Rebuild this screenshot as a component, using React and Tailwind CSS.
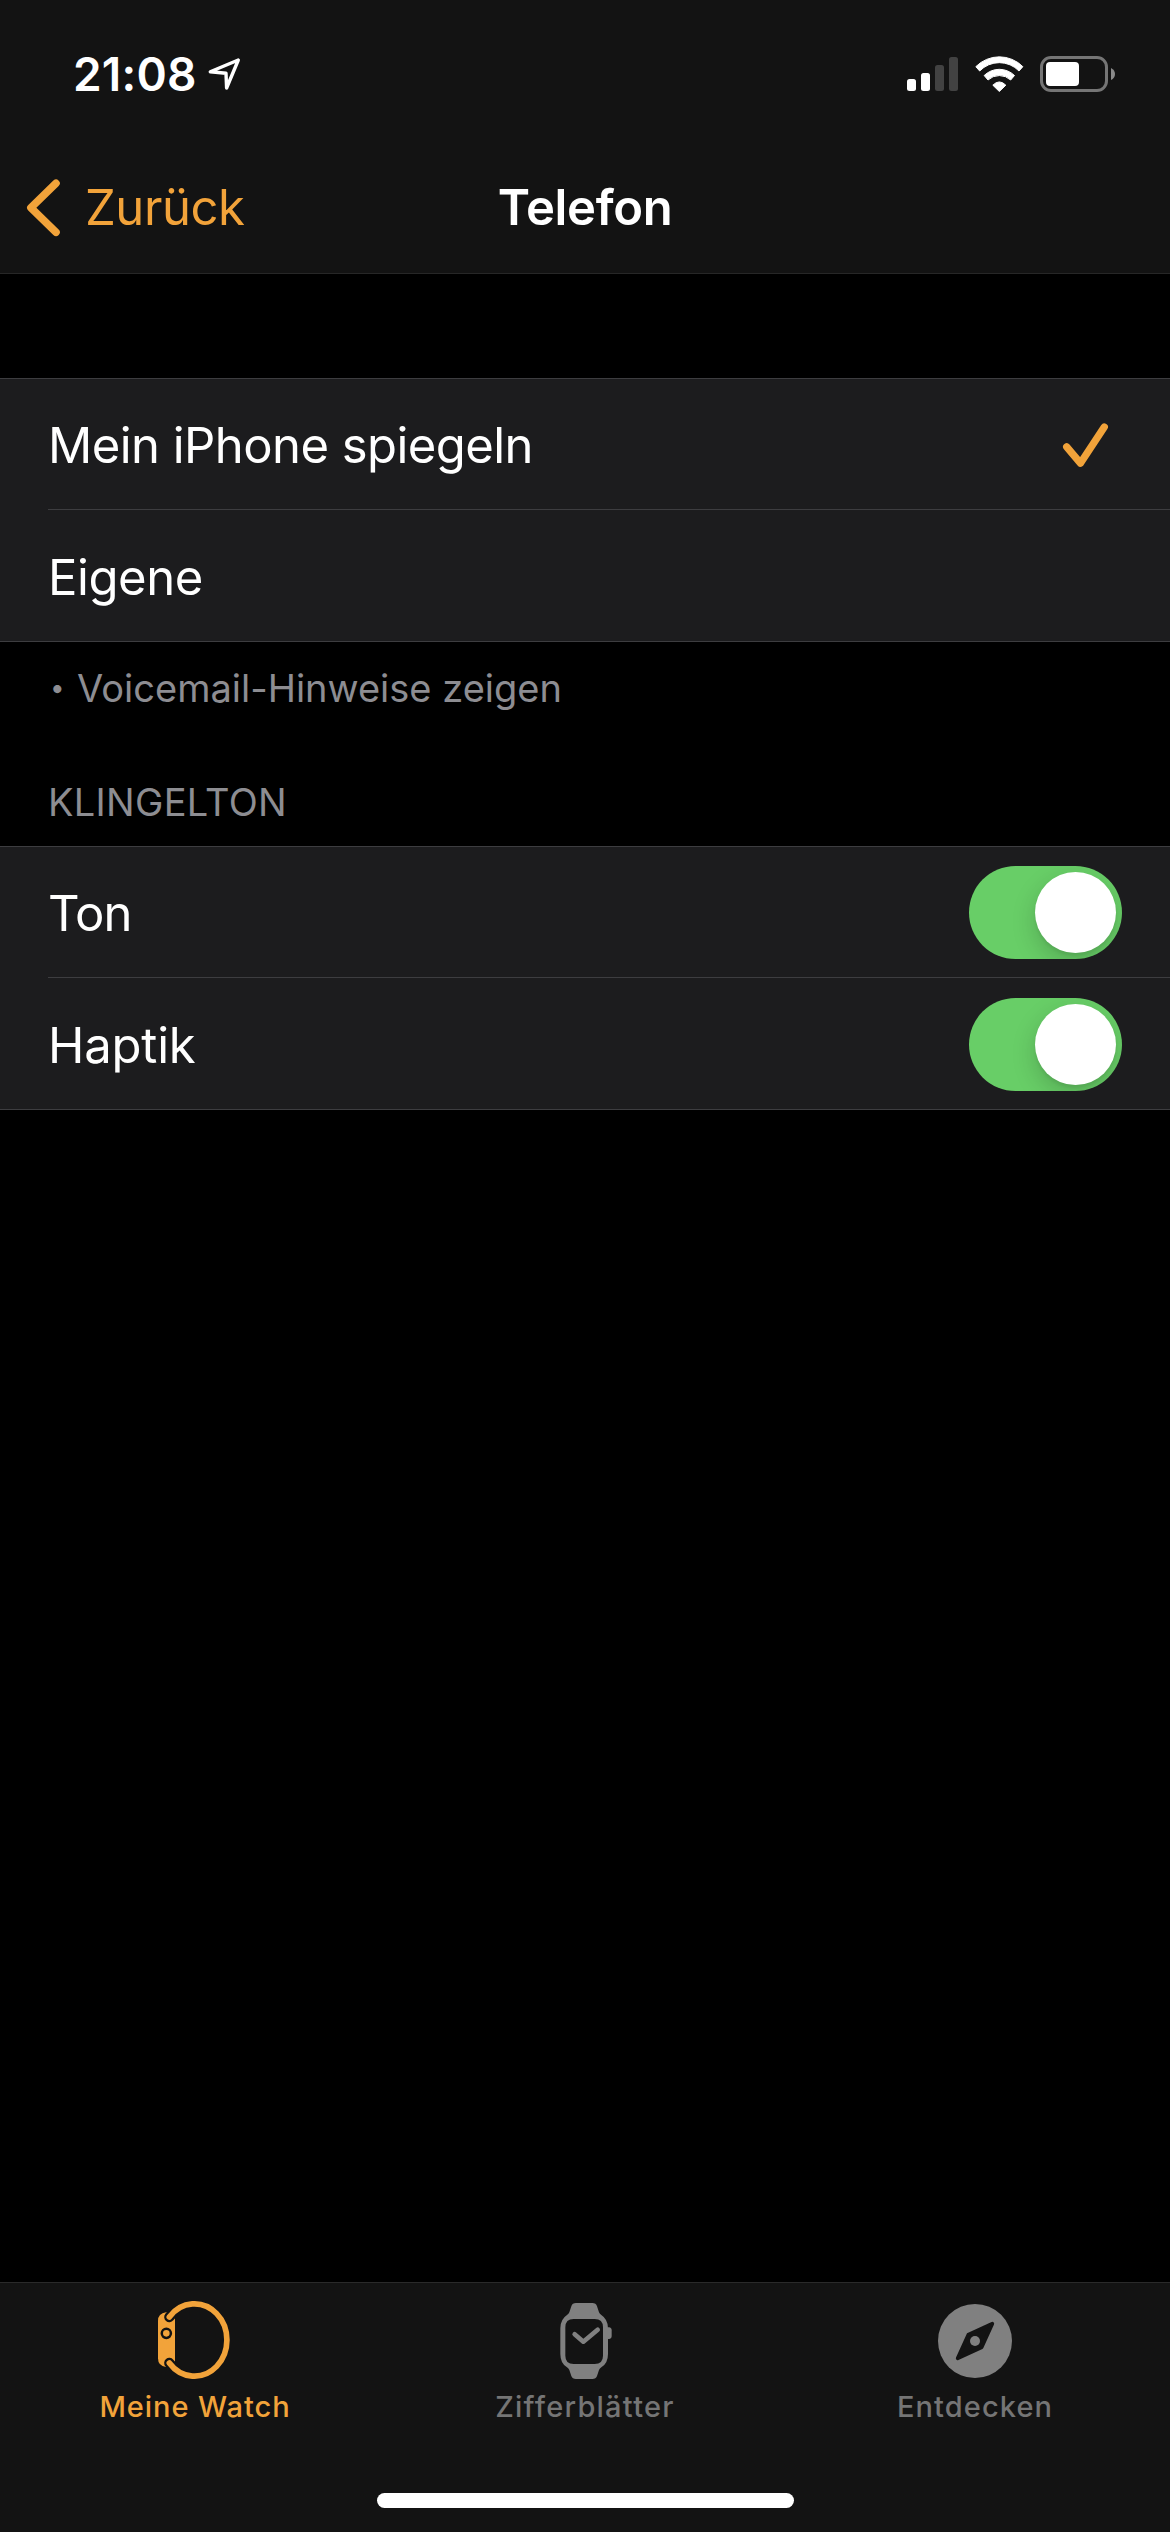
import React, { useState } from "react";

function LocationArrow() {
  return (
    <svg className="ml-[9px] h-9 w-9" viewBox="205 56 36 36" fill="none" stroke="#fff" strokeWidth="3.4" strokeLinejoin="round">
      <path d="M237.3 60 L209.3 71.8 L225 73.3 L225.6 88 Z" />
    </svg>
  );
}

function SignalBars() {
  return (
    <svg className="h-[34px] w-[51px]" viewBox="0 0 51 34">
      <rect x="0" y="22" width="9" height="12" rx="2.5" fill="#fff" />
      <rect x="14" y="16" width="9" height="18" rx="2.5" fill="#fff" />
      <rect x="28" y="8" width="9" height="26" rx="2.5" fill="#424242" />
      <rect x="42" y="0" width="9" height="34" rx="2.5" fill="#424242" />
    </svg>
  );
}

function Wifi() {
  return (
    <svg className="ml-[17px] h-9 w-[49px]" viewBox="344 75 147 108" fill="#fff" stroke="#fff" strokeWidth="3" strokeLinejoin="round">
      <path d="M346.5 107 A99 99 0 0 1 487.5 107 L476 120 A82 82 0 0 0 358 120 Z" />
      <path d="M371.5 133.5 A65 65 0 0 1 462.5 133.5 L451 147 A50 50 0 0 0 383 147 Z" />
      <path d="M397.5 162.5 Q417 143 436.5 162.5 L417 181.5 Z" />
    </svg>
  );
}

function Battery() {
  return (
    <svg className="ml-4 h-9 w-[76px]" viewBox="0 0 76 36">
      <rect x="1.5" y="1.5" width="65" height="33" rx="9.5" fill="none" stroke="#757575" strokeWidth="3" />
      <rect x="6" y="6" width="33" height="24" rx="4" fill="#fff" />
      <path d="M71 12 Q75 14 75 18 Q75 22 71 24 Z" fill="#8a8a8a" />
    </svg>
  );
}

function StatusBar() {
  return (
    <div className="flex h-[148px] items-center justify-between pr-[54px] pl-[73px]">
      <div className="flex items-center">
        <span className="text-[46px] leading-[56px] font-semibold tracking-[0.2px]">21:08</span>
        <LocationArrow />
      </div>
      <div className="flex items-center">
        <SignalBars />
        <Wifi />
        <Battery />
      </div>
    </div>
  );
}

function NavBar() {
  return (
    <div className="grid h-[125px] grid-cols-3 items-center pb-[6px]">
      <button className="flex items-center pl-[26px] text-[#f2a33a]">
        <svg className="h-[58px] w-9" viewBox="26 178 36 58" fill="none" stroke="currentColor" strokeWidth="7.6" strokeLinecap="round" strokeLinejoin="round">
          <path d="M56 182.3 L30.9 206.8 L56 231.3" />
        </svg>
        <span className="ml-[23px] text-[49px] leading-[60px] tracking-[-0.45px]">Zurück</span>
      </button>
      <h1 className="text-center text-[49px] leading-[60px] font-semibold tracking-[-0.35px]">Telefon</h1>
    </div>
  );
}

function Check() {
  return (
    <svg className="mr-[60px] h-[50px] w-12" viewBox="1062 420 48 50" fill="none" stroke="#f2a33a" strokeWidth="7.3" strokeLinecap="round" strokeLinejoin="round">
      <path d="M1066.7 446.8 L1080.4 463.2 L1104.3 427" />
    </svg>
  );
}

function Toggle({ on, onChange, label }) {
  return (
    <button
      role="switch"
      aria-checked={on}
      aria-label={label}
      onClick={onChange}
      className={`mr-12 flex h-[93px] w-[153px] items-center overflow-hidden rounded-full px-[6px] ${on ? "justify-end bg-[#68ce67]" : "justify-start bg-[#39393d]"}`}
    >
      <span className="size-[81px] rounded-full bg-white shadow-[0_9px_24px_rgba(0,0,0,0.18),0_3px_3px_rgba(0,0,0,0.06)]" />
    </button>
  );
}

function Group({ children }) {
  return <div className="border-y border-[#3d3d40] bg-[#1c1c1e]">{children}</div>;
}

function Row({ title, tracking = "tracking-[-0.45px]", last = false, children }) {
  return (
    <div className={`ml-12 flex h-[131px] items-center justify-between ${last ? "pt-[2px]" : "border-b border-[#3d3d40] pt-px"}`}>
      <span className={`pt-[2px] text-[49px] leading-[60px] ${tracking}`}>{title}</span>
      {children}
    </div>
  );
}

function BandIcon() {
  return (
    <svg className="h-20 w-[78px]" viewBox="228 90 234 240" fill="none" strokeLinecap="round">
      <path d="M285 127 H258 Q234 130 234 153 V265 Q234 288 258 291 H285 Z" fill="#f2a33a" />
      <path d="M268 141 Q278 129 292 117 M268 279 Q278 291 292 303" stroke="#131313" strokeWidth="31" />
      <path d="M268 141 A97.5 108.5 0 1 1 268 279" stroke="#f2a33a" strokeWidth="17" />
      <circle cx="259" cy="190" r="13.7" stroke="#131313" strokeWidth="7.5" />
    </svg>
  );
}

function FaceIcon() {
  return (
    <svg className="h-20 w-[78px]" viewBox="228 90 234 240" fill="#808080">
      <path
        fillRule="evenodd"
        d="M318 99 H367 Q378 99 381 109 L387 127 Q389 132 394 135 Q414 148 414 175 V252 Q414 280 394 292 Q389 295 387 300 L381 318 Q378 327 367 327 H318 Q307 327 304 318 L298 300 Q296 295 291 292 Q271 280 271 252 V175 Q271 148 291 135 Q296 132 298 127 L304 109 Q307 99 318 99 Z M311 147 Q286 147 286 172 V257 Q286 282 311 282 H374 Q399 282 399 257 V172 Q399 147 374 147 Z"
      />
      <path d="M412 172 H417 Q425 173 425 181 V198 Q425 206 417 207 H412 Z" />
      <path d="M314 193 L340 215 L383 179" fill="none" stroke="#808080" strokeWidth="14" strokeLinecap="round" strokeLinejoin="round" />
    </svg>
  );
}

function CompassIcon() {
  return (
    <svg className="h-20 w-[78px]" viewBox="198 90 234 240">
      <circle cx="315" cy="213" r="111" fill="#808080" />
      <path d="M367 161 L295 194 L263 265 L335 232 Z" fill="#131313" stroke="#131313" strokeWidth="11" strokeLinejoin="round" />
      <circle cx="315" cy="213" r="15" fill="#808080" />
    </svg>
  );
}

function Tab({ label, className, children }) {
  return (
    <button className="flex flex-col items-center pt-[17px]">
      {children}
      <span className={`mt-[9px] text-[29px] leading-9 font-medium ${className}`}>{label}</span>
    </button>
  );
}

export default function App() {
  const [sound, setSound] = useState(true);
  const [haptics, setHaptics] = useState(true);

  return (
    <div className="flex h-[2532px] w-[1170px] flex-col overflow-hidden bg-black font-[Inter,sans-serif] text-white">
      <header className="border-b border-[#272727] bg-[#131313]">
        <StatusBar />
        <NavBar />
      </header>

      <main className="flex-1 pt-[104px]">
        <Group>
          <Row title="Mein iPhone spiegeln" tracking="tracking-[-0.55px]">
            <Check />
          </Row>
          <Row title="Eigene" last />
        </Group>

        <p className="mt-[23px] flex h-[46px] items-center pl-[50px] text-[#8d8d92]">
          <span className="w-[27px] text-[26px] leading-[46px]">•</span>
          <span className="text-[38px] leading-[46px]">Voicemail-Hinweise zeigen</span>
        </p>

        <h2 className="mt-[68px] mb-[21px] pl-12 text-[38px] leading-[46px] tracking-[0.3px] text-[#8d8d92]">KLINGELTON</h2>

        <Group>
          <Row title="Ton" tracking="tracking-[-0.9px]">
            <Toggle label="Ton" on={sound} onChange={() => setSound(!sound)} />
          </Row>
          <Row title="Haptik" tracking="tracking-[-0.2px]" last>
            <Toggle label="Haptik" on={haptics} onChange={() => setHaptics(!haptics)} />
          </Row>
        </Group>
      </main>

      <footer className="flex h-[250px] flex-col justify-between border-t border-[#2a2a2a] bg-[#131313] pb-6">
        <nav className="grid grid-cols-3">
          <Tab label="Meine Watch" className="tracking-[0.95px] text-[#f2a33a]">
            <BandIcon />
          </Tab>
          <Tab label="Zifferblätter" className="tracking-[1.25px] text-[#757575]">
            <FaceIcon />
          </Tab>
          <Tab label="Entdecken" className="tracking-[1.1px] text-[#757575]">
            <CompassIcon />
          </Tab>
        </nav>
        <div className="mx-auto h-[15px] w-[417px] rounded-full bg-white" />
      </footer>
    </div>
  );
}
